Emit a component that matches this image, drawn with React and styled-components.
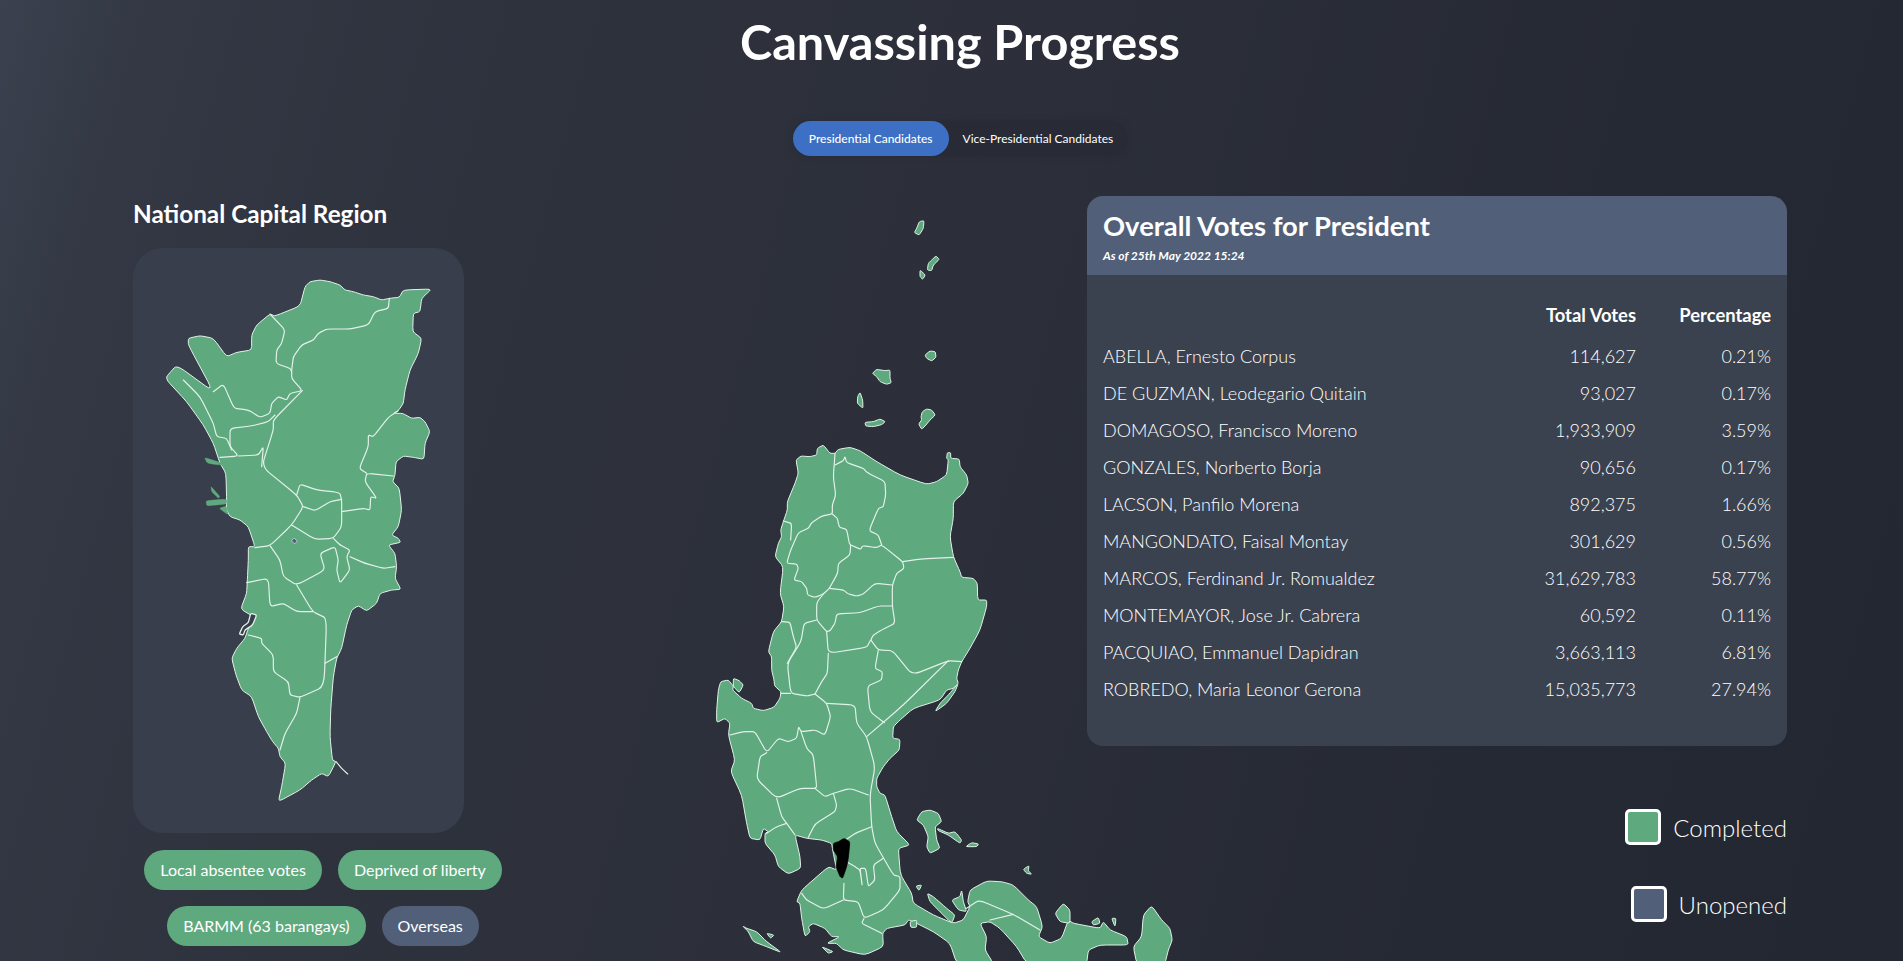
import styled, { createGlobalStyle } from "styled-components";

const GREEN = "#5fa97f";
const SLATE = "#525f78";
const EDGE = "#e2f2ea";

const candidates = [
  ["ABELLA, Ernesto Corpus", "114,627", "0.21%"],
  ["DE GUZMAN, Leodegario Quitain", "93,027", "0.17%"],
  ["DOMAGOSO, Francisco Moreno", "1,933,909", "3.59%"],
  ["GONZALES, Norberto Borja", "90,656", "0.17%"],
  ["LACSON, Panfilo Morena", "892,375", "1.66%"],
  ["MANGONDATO, Faisal Montay", "301,629", "0.56%"],
  ["MARCOS, Ferdinand Jr. Romualdez", "31,629,783", "58.77%"],
  ["MONTEMAYOR, Jose Jr. Cabrera", "60,592", "0.11%"],
  ["PACQUIAO, Emmanuel Dapidran", "3,663,113", "6.81%"],
  ["ROBREDO, Maria Leonor Gerona", "15,035,773", "27.94%"],
];

// map points were traced in overlapping crops, this moves a crop's points down to the shared origin
const at = (dy, pts) =>
  pts
    .trim()
    .split(/\s+/)
    .map((p) => {
      const [x, y] = p.split(",").map(Number);
      return `${x},${y + dy}`;
    })
    .join(" ");

// rounds each traced corner a little so coastlines don't look like straight segments
const curve = (pts, closed) => {
  const list = pts
    .trim()
    .split(/\s+/)
    .map((p) => p.split(",").map(Number));
  const n = list.length;
  const toward = (a, b) => [a[0] + (b[0] - a[0]) * 0.22, a[1] + (b[1] - a[1]) * 0.22];
  const f = (p) => `${p[0].toFixed(1)} ${p[1].toFixed(1)}`;
  let d = closed ? `M${f(toward(list[0], list[1]))}` : `M${f(list[0])}`;
  const last = closed ? n : n - 1;
  for (let i = 1; i < last; i++) {
    const p = list[i];
    d += ` L${f(toward(p, list[i - 1]))} Q${f(p)} ${f(toward(p, list[(i + 1) % n]))}`;
  }
  if (closed) {
    d += ` L${f(toward(list[0], list[n - 1]))} Q${f(list[0])} ${f(toward(list[0], list[1]))} Z`;
  } else {
    d += ` L${f(list[n - 1])}`;
  }
  return d;
};

const NCR_OUTLINE =
  "555,320 570,305 600,300 630,305 660,315 675,330 700,335 730,345 760,350 785,360 808,355 838,352 850,330 935,327 905,355 900,395 880,400 878,455 905,475 895,520 870,570 855,630 850,670 835,692 820,700 848,700 875,715 900,712 915,725 930,755 915,790 912,838 880,832 850,828 828,845 825,885 818,905 838,925 845,990 835,1040 815,1065 835,1075 842,1087 805,1095 825,1120 830,1160 825,1195 843,1228 815,1230 780,1240 770,1270 740,1293 715,1277 695,1290 680,1335 665,1405 650,1435 640,1490 632,1590 630,1670 637,1740 648,1745 625,1790 605,1780 575,1800 540,1830 475,1865 485,1820 497,1750 480,1730 475,1705 458,1685 440,1655 415,1610 395,1550 365,1530 348,1485 335,1435 350,1405 375,1375 385,1345 400,1310 362,1287 380,1240 382,1200 385,1140 385,1100 405,1100 385,1040 360,1020 330,1010 318,985 320,970 318,880 300,850 280,790 250,735 200,665 135,595 170,555 280,635 205,495 205,475 240,467 280,475 320,530 350,517 395,510 395,465 410,435 450,402 465,408 540,378";

const NCR_PIERS = [
  "253,832 315,852 300,855 262,850",
  "258,962 320,957 320,972 260,978",
  "272,918 300,950 295,955 275,935",
  "297,985 318,978 325,1005",
];

const NCR_BORDERS = [
  "808,355 805,385 765,395 745,435 690,447 620,447 595,460 580,480 545,495 520,530 515,570 515,595 547,632 510,640 500,660 475,650 455,670 450,700 420,712 385,690 342,685 310,612 280,635",
  "547,632 460,720 460,750 425,860 530,945 550,980 515,1035 450,1097 405,1103",
  "450,402 495,450 485,490 470,510 468,550 510,565 515,575",
  "465,705 445,725 395,738 330,745 330,800 355,828 300,832",
  "425,860 430,800 415,825 355,828",
  "190,600 240,650 280,730 290,770 320,775 335,810",
  "530,945 540,912 590,930 640,935 660,940 665,960 665,1040 640,1075 585,1078 515,1035",
  "550,980 585,992 630,965 665,958",
  "665,995 730,985 750,990 752,950 770,955 735,905 740,880 820,888",
  "740,880 718,865 745,800 745,765 760,770 805,712 835,692",
  "640,1075 660,1095 690,1110 680,1130 690,1170 660,1210 650,1170 655,1140 645,1100 600,1120 615,1170 530,1215 490,1190 480,1140 450,1097",
  "690,1130 735,1150 790,1165 825,1160",
  "530,1215 578,1295 620,1315 612,1520 540,1552 510,1545 505,1505 460,1475 460,1425 425,1390 425,1375 385,1365",
  "380,1208 445,1195 450,1280 490,1270 530,1295 578,1295",
  "540,1552 530,1600 495,1660 480,1710",
  "615,1450 650,1430",
  "648,1745 665,1765 683,1782",
];

const NCR_HARBOUR = "392,1300 410,1305 398,1335 375,1350 370,1365 358,1362 368,1340 385,1328";

const LUZON_OUTLINE = [
  at(720, "288,60 303,48 330,50 350,45 352,25 370,15 390,40 405,40 415,28 450,22 480,32 530,65 600,105 680,133 710,125 740,105 745,60 740,55 742,38 752,38 752,55 778,57 780,80 800,105 805,130 790,160 760,185 760,235 750,290 760,350 780,395 785,412 820,415 832,430 833,480 860,480 860,500 840,570 810,625 785,665 775,690 770,715"),
  at(1440, "775,10 760,25 740,30 720,60 640,85 600,120 580,140 578,175 600,178 598,210 570,235 550,260 530,295 530,320 540,340 555,345 575,410 590,455 630,495 595,505 600,570 605,590 635,640 640,670 700,705 760,730 790,720 810,680 803,665 810,630 860,603 905,605 940,615 985,660 1010,680 1028,740 1015,770 1050,790 1085,775 1105,720 1120,730 1200,745 1210,725 1230,750 1280,770 1285,795 1200,795 1165,810 1160,850 980,850 950,800 900,745 870,725 840,730 860,770 855,810 880,850 770,850 750,790 700,755 640,725 625,720 615,735 560,745 548,760 550,800 495,825 430,810 410,790 380,790 420,770 395,770 375,745 340,730 325,740 330,755 315,770 305,715 300,670 290,665 305,630 385,560 410,570 398,510 395,490 365,480 320,475 285,465 300,530 302,565 265,582 235,560 225,525 195,490 195,460 205,455 190,445 180,480 150,475 140,430 125,345 92,275 105,240 85,165 90,130 75,115 50,128 50,90 55,30 62,5 85,0 100,18 98,30 125,55 155,70 160,85 190,92 222,82 240,55 243,35 224,18 222,0"),
  at(720, "215,690 215,650 205,635 220,575 245,545 252,500 240,460 250,380 225,350 235,310 245,290 242,270 250,245 262,210 262,185 285,130 295,100"),
].join(" ");

const ISLANDS = [
  "650,85 658,65 672,62 670,85 658,105 643,98",
  "695,180 708,168 718,178 700,195 695,212 682,210 685,190",
  "660,210 676,225 668,238 660,230",
  "675,465 690,453 706,455 708,472 695,483 680,475",
  "517,520 530,508 555,512 570,510 570,535 574,548 560,553 540,545 530,530",
  "480,577 488,600 489,625 472,610 473,590",
  "495,667 520,665 540,657 556,665 545,674 520,680 497,678",
  "667,635 680,627 695,630 706,645 690,660 678,675 665,688 656,672 665,660 663,650",
  at(720, "100,715 118,722 130,735 118,758 100,740"),
  at(1440, "650,420 665,395 690,390 715,400 725,425 705,440 710,480 720,505 690,520 680,500 685,470 670,435"),
  at(1440, "712,445 745,460 765,455 785,480 780,490 745,465 715,452"),
  at(1440, "797,500 815,488 836,492 830,500"),
  at(1440, "970,568 987,557 985,572 995,583 980,580"),
  at(1440, "648,618 665,615 657,632"),
  at(1440, "682,640 700,650 740,685 765,705 755,730 720,695 690,665"),
  at(1440, "755,660 780,650 785,630 790,665 800,695 775,690"),
  at(1440, "128,738 140,745 170,755 200,785 245,818 200,800 160,785 145,755"),
  at(1440, "200,760 222,765 212,775"),
  at(1440, "365,800 400,815 385,820"),
  at(1440, "1355,677 1385,720 1410,745 1417,780 1405,810 1395,850 1310,850 1300,800 1325,770 1330,705"),
  at(1440, "1065,700 1090,670 1110,690 1110,730 1080,725"),
  at(1440, "1175,725 1195,712 1200,730 1180,735"),
  at(1440, "1235,715 1248,715 1245,740"),
  at(1440, "630,725 650,720 650,742 632,742"),
  at(1440, "705,95 720,70 745,45 775,10 765,35 740,70"),
];

const LUZON_BORDERS = [
  at(720, "405,40 400,110 407,165 397,195 397,222 365,228 335,248 325,265 295,278 272,330 260,370 290,372 295,385 282,420 305,425 320,445 323,465 345,472 370,462 388,445"),
  at(720, "397,222 412,235 418,262 440,268 448,310 452,315 450,345 415,370 413,400 388,445"),
  at(720, "452,315 482,328 488,317 530,323 545,315 608,365 612,385 590,400 577,435 577,498 585,550 545,570 520,585 512,600 535,630 578,632 637,705 745,662 785,665"),
  at(720, "405,75 430,62 435,50 440,68 490,85 500,97 555,125 557,165 550,200 535,205 507,272 535,285 545,315"),
  at(720, "608,365 660,357 760,352"),
  at(720, "388,445 430,450 445,462 470,468 490,462 525,430 577,435"),
  at(720, "370,462 350,488 350,540 380,575 390,572 405,550 410,522 480,518 535,498 577,498"),
  at(720, "350,540 312,550 303,605 262,670 272,760 320,768 345,762"),
  at(720, "380,575 385,640 500,622 512,600"),
  at(720, "385,640 382,700 365,725 345,762"),
  at(720, "250,243 275,250 272,300"),
  at(720, "245,545 270,547 280,590 290,622 262,670"),
  at(720, "272,760 243,760"),
  at(720, "535,630 525,685 547,695 545,720 502,738 510,815 553,848"),
  at(720, "745,662 610,795 500,890"),
  at(1440, "345,42 380,70 392,110 375,165 345,150 303,155 296,140 290,175 265,185 235,175 200,218 165,155 130,155 90,165"),
  at(1440, "380,70 465,75 470,130 500,170 525,260 510,345 515,440 525,490 580,585 600,590 600,630 550,690 492,715 475,665 430,660 432,610"),
  at(1440, "303,155 320,205 340,225 350,320 345,325 300,325 230,355 170,297 180,230 200,218"),
  at(1440, "345,325 375,350 400,340 450,325 505,345"),
  at(1440, "400,340 410,375 405,395 345,432 325,472"),
  at(1440, "230,355 245,410 260,430 285,465"),
  at(1440, "260,430 230,440 200,460"),
  at(1440, "515,440 465,460 440,478"),
  at(1440, "430,660 370,687 320,660 305,640"),
  at(1440, "492,715 485,730 545,760"),
  at(1440, "800,685 838,660 940,703 1020,750"),
  at(1440, "940,703 870,720"),
  at(1440, "550,535 520,555 525,600 505,620 497,565 480,565 487,620 480,570 465,560 445,548"),
];

const QUEZON_CITY = at(1440, "432,475 450,485 445,535 440,560 428,595 420,590 408,560 413,530 400,510 400,490 415,485");

const GlobalStyle = createGlobalStyle`
  html, body {
    margin: 0;
    padding: 0;
    height: 100%;
    overflow: hidden;
  }
  body {
    font-family: Lato, "Open Sans", sans-serif;
    color: #fff;
    background: #2a2d38;
  }
`;

const Page = styled.div`
  height: 961px;
  overflow: hidden;
  box-sizing: border-box;
  padding-top: 12px;
  background: linear-gradient(105deg, #3b414e 0%, #333844 7%, #2e323d 24%, #2c2f3a 50%, #252934 78%, #232731 100%);
`;

const Title = styled.h1`
  margin: 0;
  padding-left: 17px;
  font-size: 48.6px;
  line-height: 58px;
  font-weight: 700;
  text-align: center;
`;

const TabRow = styled.div`
  display: flex;
  justify-content: center;
  margin-top: 51px;
  padding-left: 17px;
`;

const Tabs = styled.div`
  display: flex;
  border-radius: 18px;
  background: #282b36;
  box-shadow: 0 0 6px #282b36;
`;

const Tab = styled.button`
  height: 35px;
  padding: 0 ${(p) => (p.$active ? 16 : 14)}px;
  border: 0;
  border-radius: 18px;
  font-family: Lato, sans-serif;
  font-size: 12px;
  font-weight: ${(p) => (p.$active ? 500 : 400)};
  color: #fff;
  background: ${(p) => (p.$active ? "#3d6fc4" : "transparent")};
`;

const Columns = styled.div`
  display: grid;
  grid-template-columns: 380px minmax(0, 1fr) 700px;
  margin-top: 40px;
  padding: 0 116px 0 133px;
  align-items: start;
`;

const RegionColumn = styled.section`
  display: flex;
  flex-direction: column;
`;

const RegionName = styled.h2`
  margin: 3px 0 20px;
  font-size: 24.3px;
  line-height: 29px;
  font-weight: 700;
`;

const RegionCard = styled.div`
  width: 331px;
  height: 585px;
  border-radius: 30px;
  background: #383e4b;
`;

const MapSvg = styled.svg`
  display: block;
  width: 100%;
  height: 100%;
`;

const Land = styled.path`
  fill: ${(p) => p.$fill || GREEN};
  stroke: ${(p) => p.$stroke || EDGE};
  stroke-width: ${(p) => p.$weight || 3};
  stroke-linejoin: round;
`;

const Border = styled.path`
  fill: none;
  stroke: ${EDGE};
  stroke-width: ${(p) => p.$weight || 3.5};
  stroke-linejoin: round;
  stroke-linecap: round;
`;

const Chips = styled.div`
  display: flex;
  flex-wrap: wrap;
  justify-content: center;
  gap: 16px;
  margin-top: 17px;
`;

const Chip = styled.span`
  height: 40px;
  padding: 0 16px 1px;
  box-sizing: border-box;
  display: flex;
  align-items: center;
  border-radius: 20px;
  font-size: 16px;
  white-space: nowrap;
  background: ${(p) => (p.$open ? SLATE : GREEN)};
`;

const MainMapSlot = styled.div`
  width: 500px;
  height: 761px;
  margin: 4px 0 0 187px;
`;

const ResultColumn = styled.section`
  display: flex;
  flex-direction: column;
  align-items: flex-end;
`;

const Panel = styled.div`
  width: 100%;
  height: 550px;
  border-radius: 16px;
  overflow: hidden;
  background: #3b424f;
`;

const PanelHead = styled.header`
  height: 79px;
  box-sizing: border-box;
  padding: 13px 16px 0;
  background: ${SLATE};
`;

const PanelTitle = styled.h3`
  margin: 0;
  font-size: 27.4px;
  line-height: 34px;
  font-weight: 700;
`;

const AsOf = styled.p`
  margin: 5px 0 0;
  font-size: 12px;
  line-height: 15px;
  font-weight: 700;
  font-style: italic;
`;

const VoteTable = styled.table`
  width: calc(100% - 32px);
  margin: 17px 16px 0;
  border-collapse: collapse;
  font-size: 18px;
  font-weight: 300;

  th {
    height: 45px;
    padding: 0;
    font-size: 18.4px;
    font-weight: 700;
    text-align: right;
  }

  td {
    height: 37px;
    padding: 0;
    text-align: right;
  }

  td:first-child {
    text-align: left;
  }

  th:nth-child(3),
  td:nth-child(3) {
    width: 135px;
  }
`;

const Legend = styled.div`
  display: flex;
  flex-direction: column;
  align-items: flex-end;
  gap: 41px;
  margin-top: 63px;
`;

const LegendItem = styled.div`
  display: flex;
  align-items: center;
  gap: 12px;
  font-size: 24px;
  font-weight: 300;
`;

const Swatch = styled.span`
  width: 36px;
  height: 36px;
  box-sizing: border-box;
  border: 3px solid #fff;
  border-radius: 5px;
  background: ${(p) => p.$color};
`;

const NcrMap = () => (
  <MapSvg viewBox="39 204 993 1755">
    <Land d={curve(NCR_OUTLINE, true)} />
    {NCR_PIERS.map((p) => (
      <Land key={p} d={curve(p, true)} $stroke={GREEN} $weight={1} />
    ))}
    {NCR_BORDERS.map((p) => (
      <Border key={p} d={curve(p)} />
    ))}
    <Land d={curve("514,1082 522,1074 532,1083 524,1092", true)} $fill={SLATE} $weight={2} />
    <Land d={curve(NCR_HARBOUR, true)} $fill="#383e4b" $weight={4} />
  </MapSvg>
);

const LuzonMap = () => (
  <MapSvg viewBox="0 0 1500 2283">
    <Land d={curve(LUZON_OUTLINE, true)} />
    {ISLANDS.map((p) => (
      <Land key={p} d={curve(p, true)} />
    ))}
    {LUZON_BORDERS.map((p) => (
      <Border key={p} d={curve(p)} />
    ))}
    <Land d={curve(QUEZON_CITY, true)} $fill="#000" $stroke="#000" $weight={2} />
  </MapSvg>
);

export default function App() {
  return (
    <Page>
      <GlobalStyle />
      <Title>Canvassing Progress</Title>
      <TabRow>
        <Tabs>
          <Tab $active>Presidential Candidates</Tab>
          <Tab>Vice-Presidential Candidates</Tab>
        </Tabs>
      </TabRow>
      <Columns>
        <RegionColumn>
          <RegionName>National Capital Region</RegionName>
          <RegionCard>
            <NcrMap />
          </RegionCard>
          <Chips>
            <Chip>Local absentee votes</Chip>
            <Chip>Deprived of liberty</Chip>
            <Chip>BARMM (63 barangays)</Chip>
            <Chip $open>Overseas</Chip>
          </Chips>
        </RegionColumn>
        <MainMapSlot>
          <LuzonMap />
        </MainMapSlot>
        <ResultColumn>
          <Panel>
            <PanelHead>
              <PanelTitle>Overall Votes for President</PanelTitle>
              <AsOf>As of 25th May 2022 15:24</AsOf>
            </PanelHead>
            <VoteTable>
              <thead>
                <tr>
                  <th />
                  <th>Total Votes</th>
                  <th>Percentage</th>
                </tr>
              </thead>
              <tbody>
                {candidates.map(([name, votes, share]) => (
                  <tr key={name}>
                    <td>{name}</td>
                    <td>{votes}</td>
                    <td>{share}</td>
                  </tr>
                ))}
              </tbody>
            </VoteTable>
          </Panel>
          <Legend>
            <LegendItem>
              <Swatch $color={GREEN} />
              Completed
            </LegendItem>
            <LegendItem>
              <Swatch $color={SLATE} />
              Unopened
            </LegendItem>
          </Legend>
        </ResultColumn>
      </Columns>
    </Page>
  );
}
